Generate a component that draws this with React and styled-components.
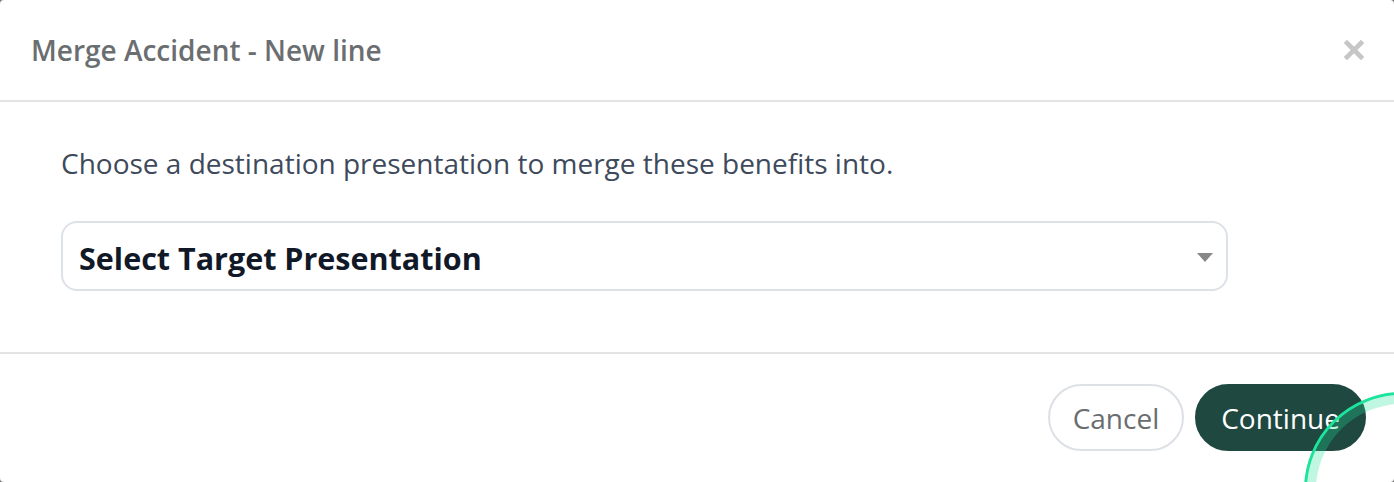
import React from "react";
import styled, { createGlobalStyle } from "styled-components";

const GlobalStyle = createGlobalStyle`
  html, body {
    margin: 0;
    padding: 0;
    background: #7a7a7a;
  }
  body {
    font-family: "Open Sans", "Noto Sans", sans-serif;
  }
`;

const Modal = styled.div`
  position: relative;
  width: 1394px;
  height: 482px;
  background: #fff;
  border-radius: 4px;
  overflow: hidden;
  display: flex;
  flex-direction: column;
`;

const Header = styled.div`
  height: 102px;
  flex-shrink: 0;
  box-sizing: border-box;
  border-bottom: 2px solid #e4e4e4;
  display: flex;
  align-items: center;
  justify-content: space-between;
  padding: 0 30px 0 31px;
`;

const Title = styled.h4`
  margin: 0;
  font-size: 28px;
  font-weight: 600;
  color: #6b6e70;
`;

const CloseButton = styled.button`
  border: 0;
  background: none;
  padding: 0;
  width: 20px;
  height: 20px;
  display: flex;
  cursor: pointer;
`;

const Body = styled.div`
  height: 252px;
  flex-shrink: 0;
  box-sizing: border-box;
  border-bottom: 2px solid #e4e4e4;
  padding: 41px 166px 0 61px;
`;

const Lead = styled.p`
  margin: 0 0 38px;
  font-size: 28px;
  line-height: 40px;
  color: #3e4a5c;
`;

const Select = styled.div`
  height: 70px;
  box-sizing: border-box;
  border: 2px solid #dde1e8;
  border-radius: 16px;
  display: flex;
  align-items: center;
  justify-content: space-between;
  padding: 3px 13px 0 16px;
`;

const SelectLabel = styled.span`
  font-size: 30.5px;
  font-weight: 700;
  color: #111827;
`;

const Caret = styled.span`
  width: 0;
  height: 0;
  border-left: 8px solid transparent;
  border-right: 8px solid transparent;
  border-top: 9px solid #878787;
`;

const Footer = styled.div`
  flex: 1;
  display: flex;
  align-items: flex-start;
  justify-content: flex-end;
  gap: 11px;
  padding: 30px 28px 0 0;
`;

const Button = styled.button`
  height: 67px;
  box-sizing: border-box;
  border-radius: 34px;
  padding: 0 ${(p) => (p.$primary ? "24px" : "23px")};
  font-family: "Open Sans", "Noto Sans", sans-serif;
  font-size: 28px;
  border: 2px solid ${(p) => (p.$primary ? "#1f4841" : "#dde1e6")};
  background: ${(p) => (p.$primary ? "#1f4841" : "#fff")};
  color: ${(p) => (p.$primary ? "#fff" : "#6a6d70")};
  cursor: pointer;
`;

const Ripple = styled.div`
  position: absolute;
  left: 1304px;
  top: 392px;
  width: 196px;
  height: 196px;
  box-sizing: border-box;
  border-radius: 50%;
  border: 3px solid #1de39c;
  box-shadow: inset 0 0 0 9px rgba(29, 227, 156, 0.28);
  pointer-events: none;
`;

export default function App() {
  return (
    <>
      <GlobalStyle />
      <Modal>
        <Header>
          <Title>Merge Accident - New line</Title>
          <CloseButton aria-label="Close">
            <svg width="20" height="20" viewBox="0 0 20 20">
              <path
                d="M3 3 L17 17 M17 3 L3 17"
                stroke="#c6c6c6"
                strokeWidth="4.6"
                strokeLinecap="square"
              />
            </svg>
          </CloseButton>
        </Header>
        <Body>
          <Lead>Choose a destination presentation to merge these benefits into.</Lead>
          <Select>
            <SelectLabel>Select Target Presentation</SelectLabel>
            <Caret />
          </Select>
        </Body>
        <Footer>
          <Button>Cancel</Button>
          <Button $primary>Continue</Button>
        </Footer>
        <Ripple />
      </Modal>
    </>
  );
}
